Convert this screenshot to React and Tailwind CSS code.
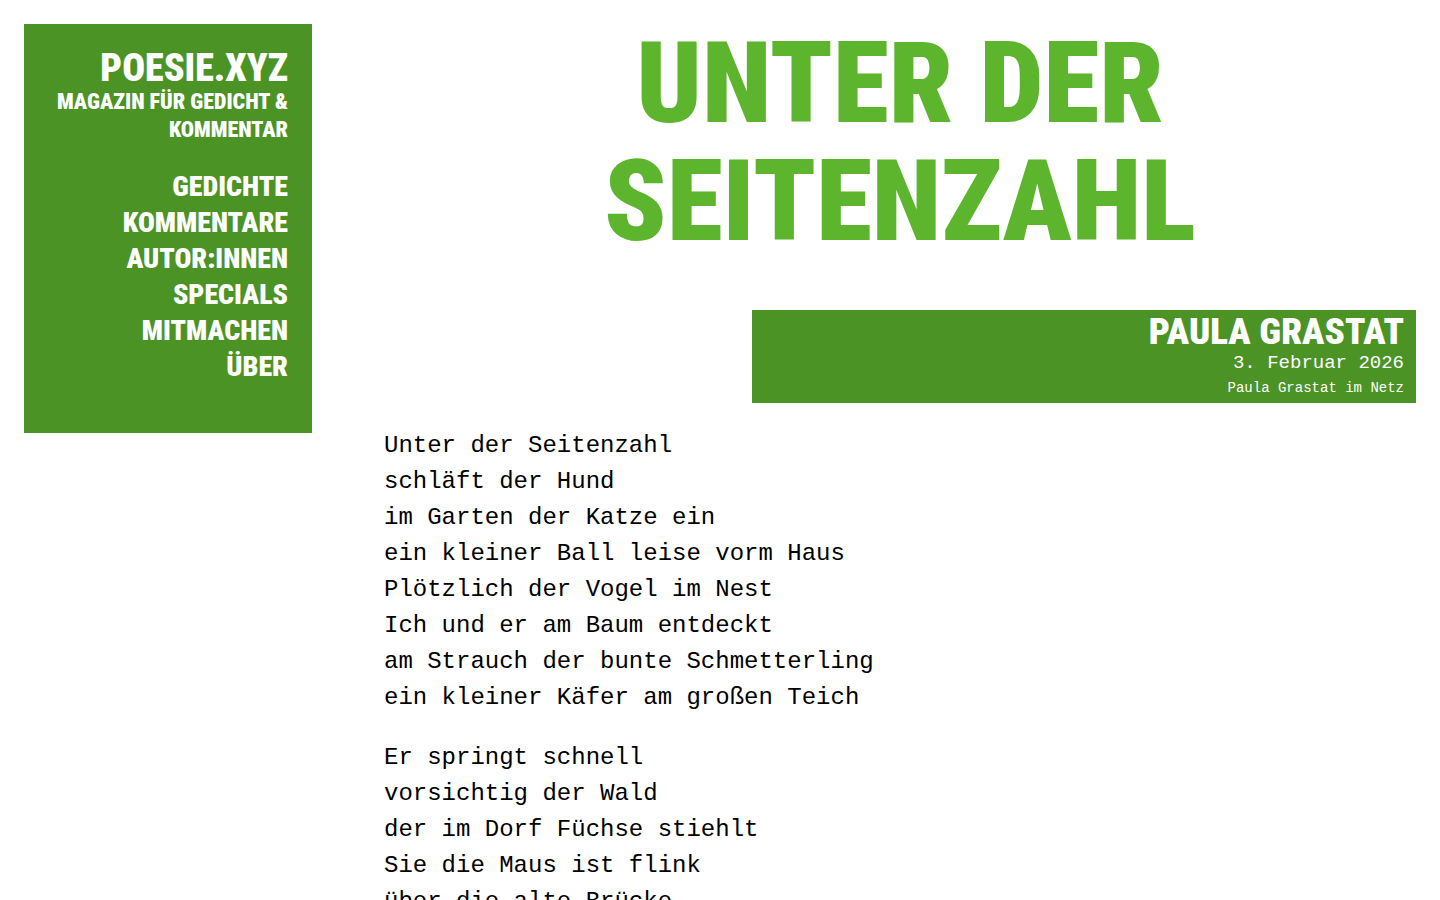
const navItems = [
  { label: "Gedichte", href: "#gedichte" },
  { label: "Kommentare", href: "#kommentare" },
  { label: "Autor:innen", href: "#autorinnen" },
  { label: "Specials", href: "#specials" },
  { label: "Mitmachen", href: "#mitmachen" },
  { label: "Über", href: "#ueber" },
];

const stanzas = [
  [
    "Unter der Seitenzahl",
    "schläft der Hund",
    "im Garten der Katze ein",
    "ein kleiner Ball leise vorm Haus",
    "Plötzlich der Vogel im Nest",
    "Ich und er am Baum entdeckt",
    "am Strauch der bunte Schmetterling",
    "ein kleiner Käfer am großen Teich",
  ],
  [
    "Er springt schnell",
    "vorsichtig der Wald",
    "der im Dorf Füchse stiehlt",
    "Sie die Maus ist flink",
    "über die alte Brücke",
  ],
];

function Sidebar() {
  return (
    <aside className="w-72 shrink-0 bg-[#4b9324] px-6 pt-6 pb-12 text-right font-['Roboto_Condensed','Roboto',sans-serif] font-black uppercase text-white">
      <a href="#start" className="block">
        <span className="block text-[38px] leading-10">Poesie.xyz</span>
        <span className="block text-[22px] leading-7">
          Magazin für Gedicht & Kommentar
        </span>
      </a>
      <nav className="mt-[25px]">
        <ul>
          {navItems.map((item) => (
            <li key={item.href}>
              <a href={item.href} className="block text-[28px] leading-9 hover:underline">
                {item.label}
              </a>
            </li>
          ))}
        </ul>
      </nav>
    </aside>
  );
}

function PoemHeader() {
  return (
    <header>
      <h1 className="text-center font-['Roboto_Condensed','Roboto',sans-serif] text-[114px] leading-[118px] font-black uppercase text-[#5db52e]">
        Unter der
        <br />
        Seitenzahl
      </h1>
      <div className="mt-[50px] ml-auto w-[664px] max-w-full bg-[#4b9324] px-3 pt-1 pb-[3px] text-right text-white">
        <a
          href="#paula-grastat"
          className="block font-['Roboto_Condensed','Roboto',sans-serif] text-[37px] leading-9 font-black uppercase"
        >
          Paula Grastat
        </a>
        <p className="text-[19px] leading-[26px]">3. Februar 2026</p>
        <a href="#netz" className="block text-sm leading-6">
          Paula Grastat im Netz
        </a>
      </div>
    </header>
  );
}

export default function App() {
  return (
    <div className="flex min-h-screen items-start gap-[72px] bg-white px-6 pt-6 font-['Liberation_Mono',monospace] text-black">
      <Sidebar />
      <main className="min-w-0 flex-1">
        <PoemHeader />
        <article className="mt-[25px] space-y-6 text-2xl leading-9">
          {stanzas.map((lines, i) => (
            <p key={i}>
              {lines.map((line) => (
                <span key={line} className="block">
                  {line}
                </span>
              ))}
            </p>
          ))}
        </article>
      </main>
    </div>
  );
}
